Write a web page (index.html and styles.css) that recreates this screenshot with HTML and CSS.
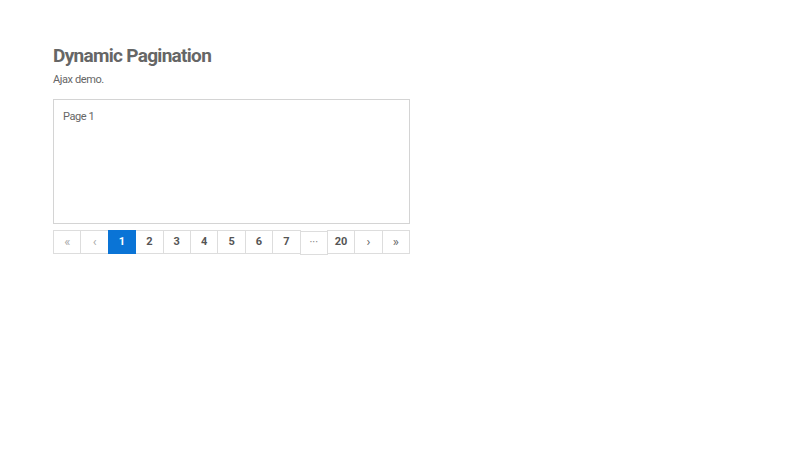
FILE: index.html
```html
<!DOCTYPE html>
<html lang="en">
<head>
    <meta charset="UTF-8">
    <meta name="viewport" content="width=device-width, initial-scale=1.0">
    <title>Dynamic Pagination</title>
    <link rel="stylesheet" href="styles.css">
</head>
<body>

<!-- main wrapper -->
<div class="wrapper">
    <h1>Dynamic Pagination</h1>
    <p class="lead">Ajax demo.</p>

    <div class="content-box">
        <p>Page 1</p>
    </div>

    <ul class="pagination">
        <li class="disabled arrow"><a href="#">&laquo;</a></li>
        <li class="disabled arrow"><a href="#">&lsaquo;</a></li>
        <li class="active"><a href="#">1</a></li>
        <li><a href="#">2</a></li>
        <li><a href="#">3</a></li>
        <li><a href="#">4</a></li>
        <li><a href="#">5</a></li>
        <li><a href="#">6</a></li>
        <li><a href="#">7</a></li>
        <li class="dots"><span>&middot;&middot;&middot;</span></li>
        <li><a href="#">20</a></li>
        <li class="arrow"><a href="#">&rsaquo;</a></li>
        <li class="arrow"><a href="#">&raquo;</a></li>
    </ul>
</div>

</body>
</html>
```

FILE: styles.css
```css
/* global */
body {
    font-family: 'Roboto', 'Liberation Sans', sans-serif;
    background: #fff;
    margin: 0;
    padding: 0;
    color: #666;
}

.wrapper {
    width: 357px;
    padding: 44px 53px;
}

h1 {
    margin: 0;
    font-size: 19px;
    font-weight: 700;
    letter-spacing: -0.7px;
    color: #666;
    line-height: 24px;
}

.lead {
    margin: 5px 0 0;
    font-size: 11px;
    letter-spacing: -0.4px;
    line-height: 14px;
}

/* content box */
.content-box {
    margin-top: 12px;
    height: 123px;
    border: 1px solid #d4d4d4;
    padding: 0 9px;
}

.content-box p {
    margin: 10px 0 0;
    font-size: 11px;
    letter-spacing: -0.4px;
    line-height: 14px;
}

/* pagination */
.pagination {
    list-style: none;
    margin: 6px 0 0;
    padding: 0;
    display: flex;
    align-items: flex-start;
}

.pagination li {
    flex: 1;
    margin-left: -1px;
}

.pagination li:first-child {
    margin-left: 0;
}

.pagination a,
.pagination span {
    display: block;
    height: 22px;
    line-height: 22px;
    border: 1px solid #ddd;
    text-align: center;
    text-decoration: none;
    color: #555;
    font-size: 11px;
    font-weight: 700;
}

.pagination .arrow a {
    font-size: 13px;
    font-weight: 400;
    color: #666;
}

.pagination .disabled a {
    color: #aaa;
}

.pagination .active a {
    background: #0a74d6;
    border-color: #0a74d6;
    color: #fff;
    position: relative;
}

.pagination .dots span {
    margin-top: 1px;
    font-weight: 400;
    color: #777;
}
```
